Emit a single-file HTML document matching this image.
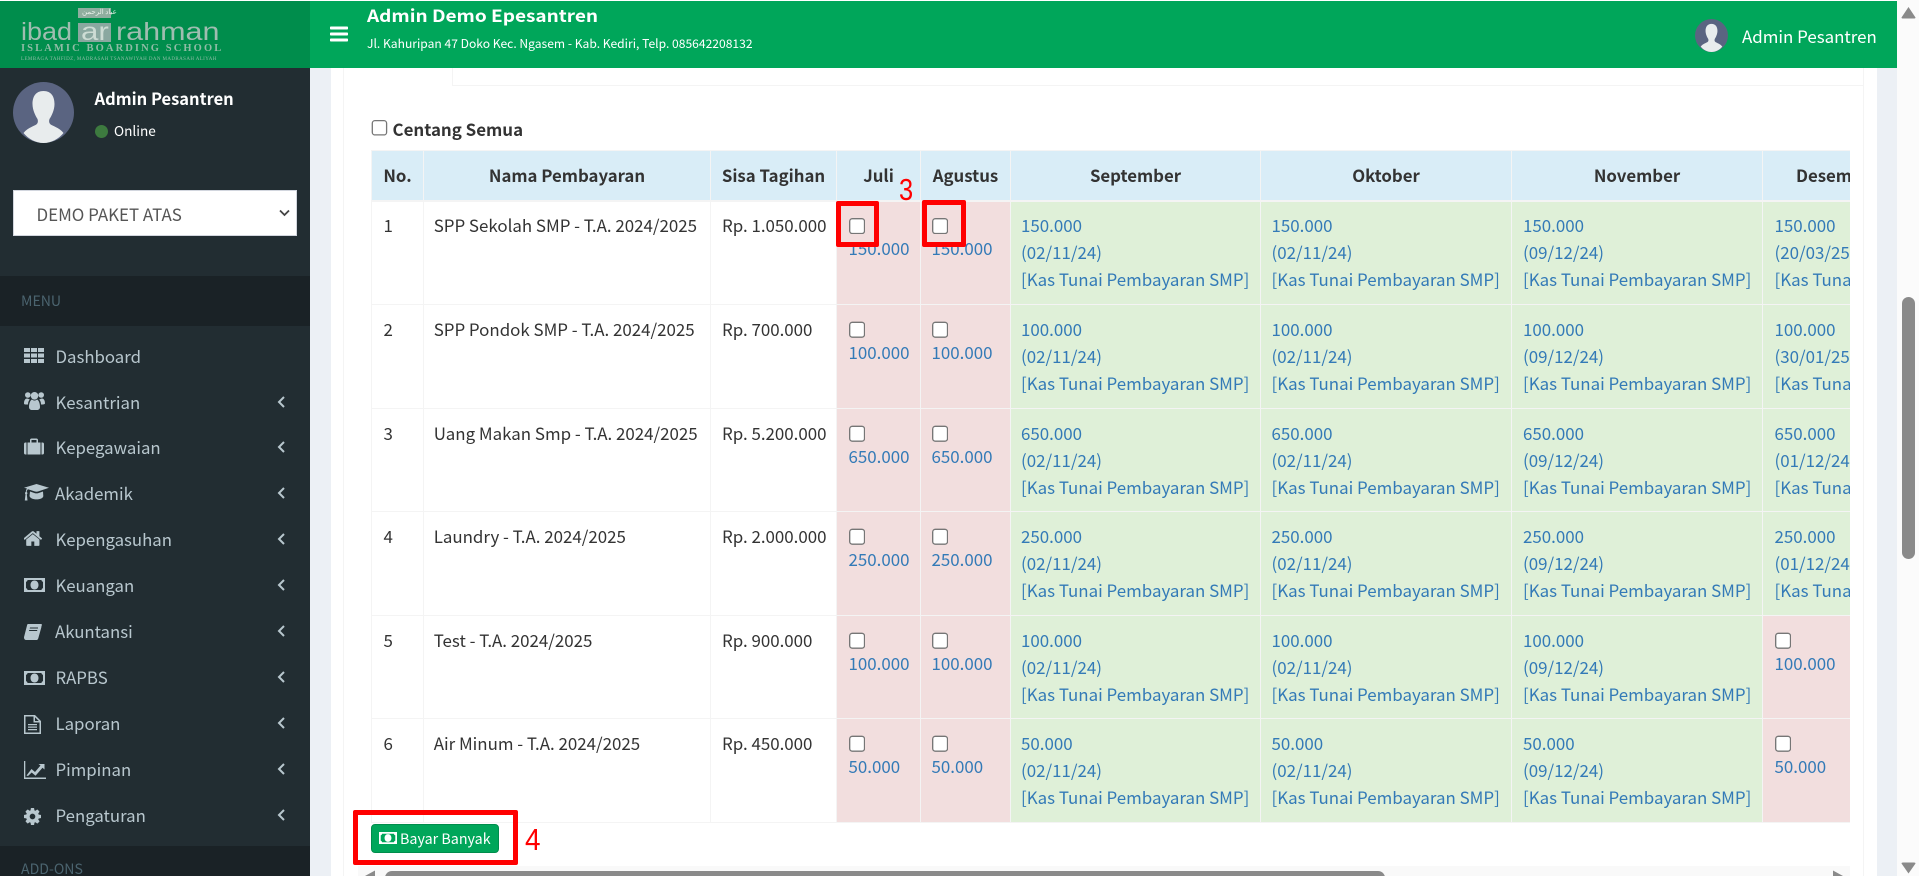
<!DOCTYPE html>
<html><head><meta charset="utf-8"><title>Admin Demo Epesantren</title>
<style>
*{box-sizing:border-box}
html,body{margin:0;padding:0;width:1919px;height:876px;overflow:hidden;background:#fff}
body{font-family:"Noto Sans CJK SC","Liberation Sans",sans-serif;font-size:16.8px;color:#333;position:relative}
.a{position:absolute}
.t{position:absolute;white-space:nowrap;line-height:1}
.lg{position:absolute;white-space:nowrap;line-height:1;font-family:"Liberation Sans",sans-serif;font-size:25px;transform-origin:left center;color:#9fbdb0}
#side{left:0;top:68px;width:310px;height:808px;background:#222d32}
.hdr{position:absolute;left:0;width:310px;background:#1a2226}
.mi{position:absolute;left:55.5px;color:#b8c7ce;white-space:nowrap;line-height:27px;height:27px;font-size:16.8px}
.ic{position:absolute;left:24px;fill:#b8c7ce}
.ch{position:absolute;left:276.5px;width:8px;height:12px;fill:none;stroke:#b8c7ce;stroke-width:2}
#wrap{position:absolute;left:371px;top:150px;width:1479px;height:673px;overflow:hidden}
table{border-collapse:collapse;table-layout:fixed;width:1642px;background:#fff}
th,td{border:1px solid #f4f4f4;line-height:27px;white-space:nowrap;vertical-align:top;padding:9.5px 0 0 11.5px;font-size:16.9px}
th{background:#d9edf7;font-weight:700;font-size:16.8px;text-align:center;padding:11px 0 0 0;height:50px;border-bottom:2px solid #f4f4f4}
th:last-child{text-align:left;padding-left:33px}
td:nth-child(2){padding-left:9.7px}
td:nth-child(3){padding-left:11px}
td:nth-child(5){padding-left:10.5px}
td:nth-child(6){padding-left:10px}
td:nth-child(7){padding-left:10.5px}
td:nth-child(8){padding-left:11px}
td{color:#333}
td.g{background:#dff0d8;color:#337ab7}
td.r{background:#f2dede;color:#337ab7}
td.r i{display:block;height:16.6px}
td.r input{display:block;zoom:1.35;margin:5px 0 0 0}
.rb{position:absolute;border:5px solid #f00;border-radius:2px}
.an{position:absolute;color:#f00;font-family:"Liberation Sans",sans-serif;line-height:1;white-space:nowrap}
</style></head><body>

<!-- top bars -->
<div class="a" style="left:0;top:1px;width:310px;height:67px;background:#008d4c"></div>
<div class="a" style="left:310px;top:1px;width:1587px;height:67px;background:#00a65a"></div>

<!-- logo -->
<div class="a" style="left:78px;top:8px;width:33px;height:10px;background:#8fae9f"></div>
<div class="t" style="left:82px;top:9px;font-size:7px;color:#e8f0ea">عباد الرحمن</div>
<div class="a" style="left:78px;top:23px;width:33px;height:19px;background:#8aa8a0"></div>
<div class="lg" style="left:21px;top:20px;transform:scaleX(1.08)">ibad</div>
<div class="lg" style="left:81px;top:20px;color:#cddcd4;transform:scaleX(1.25)">ar</div>
<div class="lg" style="left:116px;top:20px;transform:scaleX(1.22)">rahman</div>
<div class="t" style="left:21px;top:44px;font-size:10.5px;font-weight:700;color:#8fbca6;font-family:'Liberation Serif',serif;letter-spacing:2.1px">ISLAMIC BOARDING SCHOOL</div>
<div class="t" style="left:21px;top:57px;font-size:5px;color:#8fbca6;font-family:'Liberation Serif',serif;letter-spacing:.4px">LEMBAGA TAHFIDZ, MADRASAH TSANAWIYAH DAN MADRASAH ALIYAH</div>

<!-- header nav -->
<svg class="a" style="left:330px;top:25px" width="18" height="18" viewBox="0 0 1536 1536"><path fill="#fff" transform="translate(-128,-128)" d="M1664 1344v128q0 26-19 45t-45 19h-1408q-26 0-45-19t-19-45v-128q0-26 19-45t45-19h1408q26 0 45 19t19 45zm0-512v128q0 26-19 45t-45 19h-1408q-26 0-45-19t-19-45v-128q0-26 19-45t45-19h1408q26 0 45 19t19 45zm0-512v128q0 26-19 45t-45 19h-1408q-26 0-45-19t-19-45v-128q0-26 19-45t45-19h1408q26 0 45 19t19 45z"/></svg>
<div class="t" style="left:367px;top:4.5px;font-size:17px;line-height:20px;font-weight:700;color:#fff;transform:scaleX(1.117);transform-origin:left center">Admin Demo Epesantren</div>
<div class="t" style="left:367px;top:35px;font-size:12.1px;line-height:18px;color:#fff">Jl. Kahuripan 47 Doko Kec. Ngasem - Kab. Kediri, Telp. 085642208132</div>
<svg class="a" style="left:1695px;top:19px" width="33" height="33" viewBox="0 0 61 61"><circle cx="30.5" cy="30.5" r="30.5" fill="#5a6481"/><path fill="#e8eced" d="M30.5 9c-8 0-11 6-11 13 0 6 3 12 5 15 1 3 0 5-2 6-4 2-9 4-12 8 5 6 12 10 20 10s15-4 20-10c-3-4-8-6-12-8-2-1-3-3-2-6 2-3 5-9 5-15 0-7-3-13-11-13z"/></svg>
<div class="t" style="left:1742px;top:21.5px;font-size:16.9px;line-height:27px;color:#fff">Admin Pesantren</div>

<!-- content bg -->
<div class="a" style="left:310px;top:68px;width:1587px;height:808px;background:#ecf0f5"></div>
<div class="a" style="left:331px;top:68px;width:1546px;height:808px;background:#fff"></div>
<div class="a" style="left:343px;top:68px;width:1px;height:808px;background:#f4f4f4"></div>
<div class="a" style="left:1863px;top:68px;width:1px;height:808px;background:#f4f4f4"></div>
<div class="a" style="left:452px;top:68px;width:1px;height:17px;background:#f4f4f4"></div>
<div class="a" style="left:452px;top:85px;width:1411px;height:1px;background:#f4f4f4"></div>

<!-- browser scrollbar -->
<div class="a" style="left:1897px;top:0;width:22px;height:876px;background:#fbfbfb"></div>
<svg class="a" style="left:1901px;top:6px" width="15" height="13"><path d="M7.5 1L14.5 11.5Q14.5 12.5 13 12.5H2Q.5 12.5 .5 11.5Z" fill="#8a8a8a"/></svg>
<div class="a" style="left:1902px;top:297px;width:13px;height:262px;background:#8a8a8a;border-radius:7px"></div>
<svg class="a" style="left:1901px;top:862px" width="15" height="12"><path d="M7.5 11.5L14.5 1.5Q14.5 .5 13 .5H2Q.5 .5 .5 1.5Z" fill="#8a8a8a"/></svg>

<!-- sidebar -->
<div class="a" id="side"></div>
<svg class="a" style="left:13px;top:82px" width="61" height="61" viewBox="0 0 61 61"><circle cx="30.5" cy="30.5" r="30.5" fill="#5a6481"/><path fill="#e8eced" d="M30.5 9c-8 0-11 6-11 13 0 6 3 12 5 15 1 3 0 5-2 6-4 2-9 4-12 8 5 6 12 10 20 10s15-4 20-10c-3-4-8-6-12-8-2-1-3-3-2-6 2-3 5-9 5-15 0-7-3-13-11-13z"/></svg>
<div class="t" style="left:94.5px;top:85px;font-size:16.5px;line-height:27px;font-weight:700;color:#fff">Admin Pesantren</div>
<div class="a" style="left:94.5px;top:125px;width:13px;height:13px;border-radius:50%;background:#3d7a3f"></div>
<div class="t" style="left:114px;top:119px;font-size:13.6px;line-height:22px;color:#fff">Online</div>

<div class="a" style="left:13px;top:190px;width:284px;height:46px;background:#fff;border:1px solid #d2d6de"></div>
<div class="t" style="left:36.5px;top:199.5px;font-size:16.9px;line-height:27px;color:#555">DEMO PAKET ATAS</div>
<svg class="a" style="left:279px;top:209px" width="11" height="8"><path d="M1 1.5L5.5 6L10 1.5" fill="none" stroke="#444" stroke-width="1.8"/></svg>

<div class="hdr" style="top:276px;height:50px"></div>
<div class="t" style="left:21px;top:290px;font-size:14.1px;line-height:22px;color:#4b646f">MENU</div>
<div class="hdr" style="top:845.5px;height:31px"></div>
<div class="t" style="left:21px;top:858px;font-size:14.1px;line-height:22px;color:#4b646f">ADD-ONS</div>

<!-- menu icons -->
<svg class="ic" style="top:347.5px" width="20" height="15" viewBox="0 0 20 15"><path d="M0 0h6v4H0zM7 0h6v4H7zM14 0h6v4h-6zM0 5.5h6v4H0zM7 5.5h6v4H7zM14 5.5h6v4h-6zM0 11h6v4H0zM7 11h6v4H7zM14 11h6v4h-6z"/></svg>
<svg class="ic" style="top:391px" width="21" height="20" viewBox="0 0 21 20"><circle cx="3.8" cy="4" r="2.8"/><circle cx="17.2" cy="4" r="2.8"/><circle cx="10.5" cy="4.8" r="3.8"/><path d="M0 12.5C0 9 1.5 7.5 3 7.5c1 0 1.8.8 2.8 1-1 1-1.8 2.5-1.8 5H1.5C.5 13.5 0 13 0 12.5zM21 12.5c0-3.5-1.5-5-3-5-1 0-1.8.8-2.8 1 1 1 1.8 2.5 1.8 5h1.5c1 0 2.5-.5 2.5-1zM5 16c0-4 1.5-7 3-7.5 1 .7 1.5 1 2.5 1s1.5-.3 2.5-1c1.5.5 3 3.5 3 7.5 0 2-1.5 3-3 3H8c-1.5 0-3-1-3-3z"/></svg>
<svg class="ic" style="top:438px" width="20" height="18" viewBox="0 0 20 18"><path fill-rule="evenodd" d="M3.5 4.5h13V16.5h-13zM0 6c0-1 .7-1.5 1.5-1.5h1V16.5h-1C.7 16.5 0 16 0 15zM17.5 4.5h1c.8 0 1.5.5 1.5 1.5v9c0 1-.7 1.5-1.5 1.5h-1zM6 4.5V2c0-.8.7-1.5 1.5-1.5h5c.8 0 1.5.7 1.5 1.5v2.5h-1.5V2h-5v2.5z"/></svg>
<svg class="ic" style="top:484px" width="25" height="18" viewBox="0 0 25 18"><path d="M12.5 0L25 3.8 14 7.5c-1 .3-2 .3-3 0L4 5.2C3 6 2.8 7 2.7 8c.5.3.7.7.7 1.2s-.2.9-.6 1.1L3.5 16.5H.8l.7-6.2C1.2 10 1 9.7 1 9.2c0-.6.3-1 .8-1.2C1.9 6.7 2.2 5.5 3 4.5L0 3.7zM6 7.5l5 1.7c1 .3 2 .3 3 0l5-1.7.3 4.5c0 2-3.2 3.4-6.8 3.4S6 14 5.5 12z"/></svg>
<svg class="ic" style="top:531px" width="18" height="15" viewBox="128 256 1568 1280"><path d="M1472 992v480q0 26-19 45t-45 19h-384v-384h-256v384h-384q-26 0-45-19t-19-45v-480q0-1 .5-3t.5-3l575-474 575 474q1 2 1 6zm223-69l-62 74q-8 9-21 11h-3q-13 0-21-7l-692-577-692 577q-12 8-24 7-13-2-21-11l-62-74q-8-10-7-23.5t11-21.5l719-599q32-26 76-26t76 26l244 204v-195q0-14 9-23t23-9h192q14 0 23 9t9 23v408l219 182q10 8 11 21.5t-7 23.5z"/></svg>
<svg class="ic" style="top:578px" width="21" height="14" viewBox="0 0 21 14"><path fill-rule="evenodd" d="M0 0h21v14H0zM3.5 2C3.5 3 2.8 3.8 2 3.8v6.4c.8 0 1.5.8 1.5 1.8h14c0-1 .7-1.8 1.5-1.8V3.8c-.8 0-1.5-.8-1.5-1.8zM10.5 2.5c2.5 0 4 2 4 4.5s-1.5 4.5-4 4.5-4-2-4-4.5 1.5-4.5 4-4.5z"/><path d="M9.3 4.5h1.8v4.2h1v1H9v-1h1V6l-.7.5-.5-.8z"/></svg>
<svg class="ic" style="top:624px" width="18" height="16" viewBox="0 0 18 16"><path d="M4 0h13c.8 0 1 .6.8 1.3L14.5 13c-.3.9-.9 1.2-1.8 1.2H2.7c-.8 0-1-.5-.6-1.4l0 0C2.5 12 3 12 3.7 12h9.3c1 0 1.2-.2 1.5-1L17 2.8l.4.3L14.3 14.2c-.3 1.2-1 1.8-2.2 1.8H2.3C1 16 0 15 0 13.5 0 13 .1 12.5.3 12L3 1.5C3.2.6 3.5 0 4 0z"/><path fill="#222d32" d="M6 3.5h8v1H5.7zM5.2 6h8v1H5z"/></svg>
<svg class="ic" style="top:671px" width="21" height="14" viewBox="0 0 21 14"><path fill-rule="evenodd" d="M0 0h21v14H0zM3.5 2C3.5 3 2.8 3.8 2 3.8v6.4c.8 0 1.5.8 1.5 1.8h14c0-1 .7-1.8 1.5-1.8V3.8c-.8 0-1.5-.8-1.5-1.8zM10.5 2.5c2.5 0 4 2 4 4.5s-1.5 4.5-4 4.5-4-2-4-4.5 1.5-4.5 4-4.5z"/><path d="M9.3 4.5h1.8v4.2h1v1H9v-1h1V6l-.7.5-.5-.8z"/></svg>
<svg class="ic" style="top:715px" width="17" height="19" viewBox="0 0 17 19"><path fill-rule="evenodd" d="M0 0h11l6 6v13H0zM1.5 1.5v16h14V7.5H9.5v-6zM11 2.2v3.8h3.800z"/><path d="M4 9h9v1.3H4zM4 11.5h9v1.3H4zM4 14h9v1.3H4z"/></svg>
<svg class="ic" style="top:761px" width="22" height="18" viewBox="0 0 22 18"><path d="M0 0h1.3v16.5H22V18H0z"/><path d="M2.5 14.5L7.5 8l3.5 3 5.5-6.5-2-1.5H20.5V8.5l-2-1.8-7 8-3.8-3.2-3.7 3.5z"/></svg>
<svg class="ic" style="top:808px" width="17" height="17" viewBox="128 128 1536 1536"><path d="M1152 896q0-106-75-181t-181-75-181 75-75 181 75 181 181 75 181-75 75-181zm512-109v222q0 12-8 23t-20 13l-185 28q-19 54-39 91 35 50 107 138 10 12 10 25t-9 23q-27 37-99 108t-94 71q-12 0-26-9l-138-108q-44 23-91 38-16 136-29 186-7 28-36 28h-222q-14 0-24.5-8.5t-11.5-21.5l-28-184q-49-16-90-37l-141 107q-10 9-25 9-14 0-25-11-126-114-165-168-7-10-7-23 0-12 8-23 15-21 51-66.5t54-70.5q-27-50-41-99l-183-27q-13-2-21-12.5t-8-23.5v-222q0-12 8-23t19-13l186-28q14-46 39-92-40-57-107-138-10-12-10-24 0-10 9-23 26-36 98.5-107.5t94.5-71.5q13 0 26 10l138 107q44-23 91-38 16-136 29-186 7-28 36-28h222q14 0 24.5 8.5t11.5 21.5l28 184q49 16 90 37l142-107q9-9 24-9 13 0 25 10 129 119 165 170 7 8 7 22 0 12-8 23-15 21-51 66.5t-54 70.5q26 50 41 98l183 28q13 2 21 12.5t8 23.5z"/></svg>

<div class="mi" style="top:342.5px">Dashboard</div>
<div class="mi" style="top:388.5px">Kesantrian</div>
<div class="mi" style="top:433.5px">Kepegawaian</div>
<div class="mi" style="top:479.5px;left:55px">Akademik</div>
<div class="mi" style="top:525.5px">Kepengasuhan</div>
<div class="mi" style="top:571.5px">Keuangan</div>
<div class="mi" style="top:617.5px;left:55px">Akuntansi</div>
<div class="mi" style="top:663.5px">RAPBS</div>
<div class="mi" style="top:710px">Laporan</div>
<div class="mi" style="top:756px">Pimpinan</div>
<div class="mi" style="top:802px">Pengaturan</div>

<svg class="ch" style="top:396px" viewBox="0 0 8 12"><path d="M7 1L2 6l5 5"/></svg>
<svg class="ch" style="top:441px" viewBox="0 0 8 12"><path d="M7 1L2 6l5 5"/></svg>
<svg class="ch" style="top:487px" viewBox="0 0 8 12"><path d="M7 1L2 6l5 5"/></svg>
<svg class="ch" style="top:533px" viewBox="0 0 8 12"><path d="M7 1L2 6l5 5"/></svg>
<svg class="ch" style="top:579px" viewBox="0 0 8 12"><path d="M7 1L2 6l5 5"/></svg>
<svg class="ch" style="top:625px" viewBox="0 0 8 12"><path d="M7 1L2 6l5 5"/></svg>
<svg class="ch" style="top:671px" viewBox="0 0 8 12"><path d="M7 1L2 6l5 5"/></svg>
<svg class="ch" style="top:717px" viewBox="0 0 8 12"><path d="M7 1L2 6l5 5"/></svg>
<svg class="ch" style="top:763px" viewBox="0 0 8 12"><path d="M7 1L2 6l5 5"/></svg>
<svg class="ch" style="top:809px" viewBox="0 0 8 12"><path d="M7 1L2 6l5 5"/></svg>

<!-- centang -->
<div class="a" style="left:371px;top:119.5px"><input type="checkbox" style="zoom:1.3;margin:0;display:block"></div>
<div class="t" style="left:392.5px;top:115px;font-weight:700;line-height:27px;font-size:16.9px;color:#333">Centang Semua</div>

<!-- table -->
<div id="wrap"><table>
<colgroup><col style="width:52px"><col style="width:287px"><col style="width:126px"><col style="width:84px"><col style="width:90px"><col style="width:250px"><col style="width:251px"><col style="width:251px"><col style="width:251px"></colgroup>
<tr><th>No.</th><th>Nama Pembayaran</th><th>Sisa Tagihan</th><th>Juli</th><th>Agustus</th><th>September</th><th>Oktober</th><th>November</th><th>Desember</th></tr>
<tr style="height:104px"><td>1</td><td>SPP Sekolah SMP - T.A. 2024/2025</td><td>Rp. 1.050.000</td><td class="r"><i><input type="checkbox"></i>150.000</td><td class="r"><i><input type="checkbox"></i>150.000</td><td class="g">150.000<br>(02/11/24)<br>[Kas Tunai Pembayaran SMP]</td><td class="g">150.000<br>(02/11/24)<br>[Kas Tunai Pembayaran SMP]</td><td class="g">150.000<br>(09/12/24)<br>[Kas Tunai Pembayaran SMP]</td><td class="g">150.000<br>(20/03/25)<br>[Kas Tunai Pembayaran SMP]</td></tr>
<tr style="height:104px"><td>2</td><td>SPP Pondok SMP - T.A. 2024/2025</td><td>Rp. 700.000</td><td class="r"><i><input type="checkbox"></i>100.000</td><td class="r"><i><input type="checkbox"></i>100.000</td><td class="g">100.000<br>(02/11/24)<br>[Kas Tunai Pembayaran SMP]</td><td class="g">100.000<br>(02/11/24)<br>[Kas Tunai Pembayaran SMP]</td><td class="g">100.000<br>(09/12/24)<br>[Kas Tunai Pembayaran SMP]</td><td class="g">100.000<br>(30/01/25)<br>[Kas Tunai Pembayaran SMP]</td></tr>
<tr style="height:103px"><td>3</td><td>Uang Makan Smp - T.A. 2024/2025</td><td>Rp. 5.200.000</td><td class="r"><i><input type="checkbox"></i>650.000</td><td class="r"><i><input type="checkbox"></i>650.000</td><td class="g">650.000<br>(02/11/24)<br>[Kas Tunai Pembayaran SMP]</td><td class="g">650.000<br>(02/11/24)<br>[Kas Tunai Pembayaran SMP]</td><td class="g">650.000<br>(09/12/24)<br>[Kas Tunai Pembayaran SMP]</td><td class="g">650.000<br>(01/12/24)<br>[Kas Tunai Pembayaran SMP]</td></tr>
<tr style="height:104px"><td>4</td><td>Laundry - T.A. 2024/2025</td><td>Rp. 2.000.000</td><td class="r"><i><input type="checkbox"></i>250.000</td><td class="r"><i><input type="checkbox"></i>250.000</td><td class="g">250.000<br>(02/11/24)<br>[Kas Tunai Pembayaran SMP]</td><td class="g">250.000<br>(02/11/24)<br>[Kas Tunai Pembayaran SMP]</td><td class="g">250.000<br>(09/12/24)<br>[Kas Tunai Pembayaran SMP]</td><td class="g">250.000<br>(01/12/24)<br>[Kas Tunai Pembayaran SMP]</td></tr>
<tr style="height:103px"><td>5</td><td>Test - T.A. 2024/2025</td><td>Rp. 900.000</td><td class="r"><i><input type="checkbox"></i>100.000</td><td class="r"><i><input type="checkbox"></i>100.000</td><td class="g">100.000<br>(02/11/24)<br>[Kas Tunai Pembayaran SMP]</td><td class="g">100.000<br>(02/11/24)<br>[Kas Tunai Pembayaran SMP]</td><td class="g">100.000<br>(09/12/24)<br>[Kas Tunai Pembayaran SMP]</td><td class="r"><i><input type="checkbox"></i>100.000</td></tr>
<tr style="height:104px"><td>6</td><td>Air Minum - T.A. 2024/2025</td><td>Rp. 450.000</td><td class="r"><i><input type="checkbox"></i>50.000</td><td class="r"><i><input type="checkbox"></i>50.000</td><td class="g">50.000<br>(02/11/24)<br>[Kas Tunai Pembayaran SMP]</td><td class="g">50.000<br>(02/11/24)<br>[Kas Tunai Pembayaran SMP]</td><td class="g">50.000<br>(09/12/24)<br>[Kas Tunai Pembayaran SMP]</td><td class="r"><i><input type="checkbox"></i>50.000</td></tr>
</table></div>

<!-- button -->
<div class="a" style="left:371px;top:824px;width:128px;height:29px;background:#00a65a;border:1px solid #008d4c;border-radius:4px"></div>
<svg class="a" style="left:379px;top:832px" width="18" height="12" viewBox="0 0 21 14"><path fill="#fff" fill-rule="evenodd" d="M0 0h21v14H0zM3.5 2C3.5 3 2.8 3.8 2 3.8v6.4c.8 0 1.5.8 1.5 1.8h14c0-1 .7-1.8 1.5-1.8V3.8c-.8 0-1.5-.8-1.5-1.8zM10.5 2.5c2.5 0 4 2 4 4.5s-1.5 4.5-4 4.5-4-2-4-4.5 1.5-4.5 4-4.5z"/></svg>
<div class="t" style="left:400px;top:827.5px;font-size:14.3px;line-height:22px;color:#fff">Bayar Banyak</div>

<!-- horizontal scrollbar -->
<div class="a" style="left:358px;top:866px;width:1492px;height:10px;background:#f9f9f9"></div>
<svg class="a" style="left:365px;top:870px" width="11" height="6"><path d="M0 6L10 .5V6z" fill="#8a8a8a"/></svg>
<div class="a" style="left:385px;top:871px;width:1000px;height:14px;background:#8a8a8a;border-radius:7px"></div>
<svg class="a" style="left:1833px;top:870px" width="11" height="6"><path d="M0 .5L10 6H0z" fill="#8a8a8a"/></svg>

<!-- annotations -->
<div class="rb" style="left:836px;top:201px;width:43px;height:46px"></div>
<div class="rb" style="left:922px;top:200px;width:44px;height:47px"></div>
<div class="an" style="left:899px;top:174px;font-size:31px;transform:scaleX(.82);transform-origin:left center">3</div>
<div class="rb" style="left:353px;top:810px;width:165px;height:55px"></div>
<div class="an" style="left:525px;top:824px;font-size:31px;transform:scaleX(.9);transform-origin:left center">4</div>
</body></html>
